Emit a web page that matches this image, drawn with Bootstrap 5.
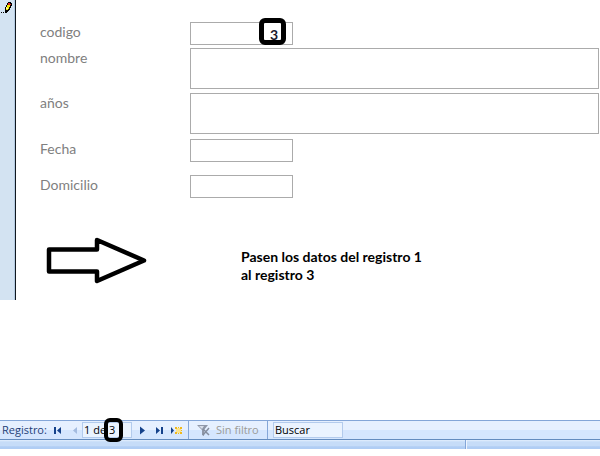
<!DOCTYPE html>
<html lang="es">
<head>
<meta charset="utf-8">
<meta name="viewport" content="width=device-width, initial-scale=1">
<title>Registro</title>
<link href="https://cdn.jsdelivr.net/npm/bootstrap@5.3.0/dist/css/bootstrap.min.css" rel="stylesheet">
<style>
  body { font-family: Lato, "Open Sans", sans-serif; font-size: 14px; line-height: 18px; color: #000; background: #fff; }
  .selector { width: 16px; background: #d3e3f2; border-right: 1px solid #10181f; box-shadow: inset -1px 0 #b4cbe2; }
  .record { min-height: 300px; }
  .fields { padding: 22px 1px 0 24px; }
  .field-label { width: 150px; color: #808080; padding-top: 1px; line-height: 18px; }
  .field-box.form-control { border: 1px solid #ababab; border-radius: 0; padding: 2px 14px 0 4px; min-height: 0; font-size: 14px; line-height: 18px; color: #1a1a2e; resize: none; }
  .short { width: 103px; }
  .field-box.one-line { height: 23px; }
  .field-box.two-line { height: 41px; }
  .gap-s { margin-bottom: 3px; }
  .gap-m { margin-bottom: 5px; }
  .gap-l { margin-bottom: 13px; }
  .ring { position: absolute; border: 4px solid #000; border-radius: 6px; pointer-events: none; }
  .ring-code { right: 7px; top: -4px; width: 27px; height: 27px; border-width: 5px; }
  .ring-count { left: 22px; top: -4px; width: 19px; height: 24px; }
  .note { margin: 39px 0 0 24px; }
  .arrow { width: 102px; margin-left: 6px; }
  .note-text { margin: 11px 0 0 93px; font-size: 14px; font-weight: 700; line-height: 18px; }
  .record-nav { margin-top: 120px; height: 20px; font: 11px/16px "Open Sans", "Noto Sans", sans-serif; color: #1f3f77; background: linear-gradient(#e6f0ff 0 50%, #d5e6fe 50%); border-top: 1px solid #84a6d8; border-bottom: 1px solid #648cbf; }
  .nav-title { width: 50px; padding-left: 2px; white-space: nowrap; }
  .step { width: 16px; height: 16px; padding: 0; border: 0; background: none; line-height: 0; }
  .nav-input { width: 100%; height: 16px; border: 1px solid #b3cbed; background: #eaf3ff; color: #000; font: inherit; padding: 0 1px; border-radius: 0; display: block; }
  .counter { width: 50px; margin-right: 3px; }
  .search { width: 70px; margin-left: 5px; }
  .filter { border: solid #84a6d8; border-width: 0 1px; width: 80px; height: 18px; margin-left: 5px; padding: 0 0 0 7px; background: none; color: #9b9b98; white-space: nowrap; font: inherit; }
  .status { height: 9px; background: linear-gradient(#dceafc 0 10%, #c6dcf8 20% 65%, #b0cdf4 75%); }
  .status-left { width: 466px; border-right: 1px solid #84a6d8; box-shadow: 1px 0 #eef5ff; }
</style>
<script src="https://cdn.jsdelivr.net/npm/bootstrap@5.3.0/dist/js/bootstrap.bundle.min.js"></script>
</head>
<body>
<main class="record d-flex">
  <div class="selector flex-shrink-0">
    <svg class="d-block" width="15" height="15" viewBox="0 0 15 15" aria-label="Editando" shape-rendering="crispEdges">
      <path d="M1 12h1v1H1zM3 12h1v1H3zM5 11h2v2H5z" fill="#000"/>
      <path d="M8 2h3v1h1v3h-1v2h-1v2H9v1H8v1H5V7h1V5h1V3h1z" fill="#000"/>
      <path d="M8 5h2v2H9v2H8v1H6V7h1V5z" fill="#f4e800"/>
      <path d="M8 3h2v1h1v1H8z" fill="#e02a20"/>
      <path d="M6 7h1v1h1v1H6z" fill="#fff9a0"/>
    </svg>
  </div>
  <div class="flex-fill">
    <form class="fields">
      <div class="d-flex gap-s">
        <label class="field-label flex-shrink-0" for="codigo">codigo</label>
        <div class="short position-relative">
          <input class="form-control field-box one-line text-end fw-bold" id="codigo" value="3">
          <span class="ring ring-code"></span>
        </div>
      </div>
      <div class="d-flex mb-1">
        <label class="field-label flex-shrink-0" for="nombre">nombre</label>
        <textarea class="form-control field-box two-line" id="nombre"></textarea>
      </div>
      <div class="d-flex gap-m">
        <label class="field-label flex-shrink-0" for="anos">años</label>
        <textarea class="form-control field-box two-line" id="anos"></textarea>
      </div>
      <div class="d-flex gap-l">
        <label class="field-label flex-shrink-0" for="fecha">Fecha</label>
        <input class="form-control field-box one-line short" id="fecha">
      </div>
      <div class="d-flex">
        <label class="field-label flex-shrink-0" for="domicilio">Domicilio</label>
        <input class="form-control field-box one-line short" id="domicilio">
      </div>
    </form>
    <div class="note d-flex align-items-start">
      <svg class="arrow flex-shrink-0" height="50" viewBox="0 0 102 50" aria-hidden="true">
        <path d="M3 12.500H51V3L98 23.500L51 44V34.500H3Z" fill="#fff" stroke="#000" stroke-width="4.500" stroke-linejoin="round"/>
      </svg>
      <p class="note-text">Pasen los datos del registro 1<br>al registro 3</p>
    </div>
  </div>
</main>
<nav class="record-nav d-flex align-items-center" aria-label="Registros">
  <label class="nav-title" for="actual">Registro:</label>
  <button class="step" type="button" aria-label="Primero"><svg width="16" height="16"><path d="M4 5h2v7H4zM11 5v7L7 8.500z" fill="#15428b"/></svg></button>
  <button class="step" type="button" aria-label="Anterior"><svg width="16" height="16"><path d="M11 5v7L7 8.500z" fill="#a3bbe0"/></svg></button>
  <div class="counter position-relative">
    <input class="nav-input" id="actual" value="1 de 3">
    <span class="ring ring-count"></span>
  </div>
  <button class="step" type="button" aria-label="Siguiente"><svg width="16" height="16"><path d="M5 4.500v8l5-4z" fill="#15428b"/></svg></button>
  <button class="step" type="button" aria-label="Último"><svg width="16" height="16"><path d="M5 5v7l4-3.500zM10 5h2v7h-2z" fill="#15428b"/></svg></button>
  <button class="step" type="button" aria-label="Nuevo"><svg width="16" height="16"><path d="M4 5v7l3-3.500z" fill="#15428b"/><path d="M9 6h5v5H9z" fill="#fbe38a"/><path d="M8 5h2v2H8zM11 5h1v1h-1zM13 5h2v2h-2zM8 10h2v2H8zM11 11h1v1h-1zM13 10h2v2h-2zM14 8h1v1h-1z" fill="#f0b91c"/></svg></button>
  <button class="filter d-flex align-items-center" type="button">
    <svg class="flex-shrink-0" width="16" height="16"><path d="M1 3h11L8 8v6l-2-1V8z" fill="#8f97a8"/><path d="M3 4h5L6 7z" fill="#d7dde8"/><path d="M7 7l6 6M13 6l-6 7" stroke="#858d9d" stroke-width="1.500"/></svg>
    <span class="ms-1">Sin filtro</span>
  </button>
  <div class="search"><input class="nav-input" aria-label="Buscar" value="Buscar"></div>
</nav>
<footer class="status d-flex"><div class="status-left"></div></footer>
</body>
</html>
